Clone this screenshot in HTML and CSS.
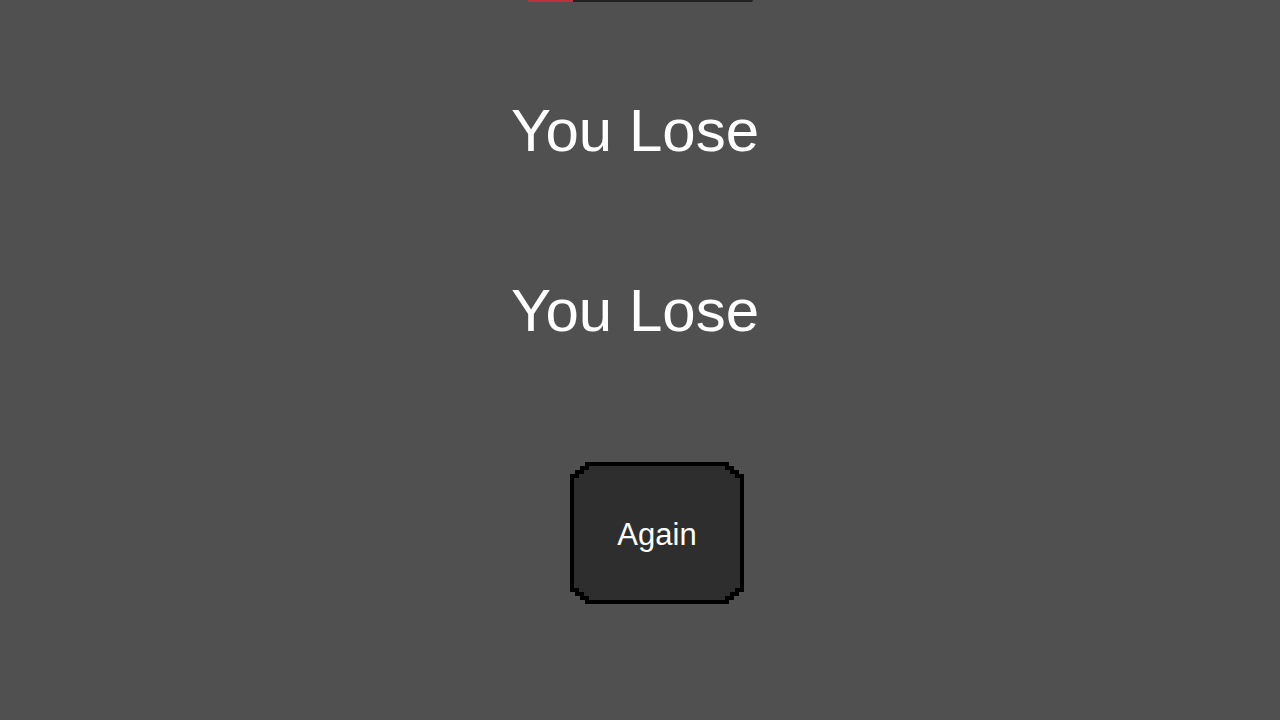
FILE: index.html
```html
<!DOCTYPE html>
<html lang="en">
<head>
    <meta charset="UTF-8">
    <title>Game over</title>
    <link rel="stylesheet" href="styles.css">
</head>
<body>
<main class="screen">
    <div class="health">
        <div class="health-fill" style="width: 20%"></div>
    </div>
    <h1 class="result">You Lose</h1>
    <h1 class="result">You Lose</h1>
    <button class="pixel-btn">
        <span class="pixel-btn-inner">Again</span>
    </button>
</main>
</body>
</html>
```

FILE: styles.css
```css
* {
    padding: 0;
    margin: 0;
    box-sizing: border-box;
}

html, body {
    height: 100%;
}

body {
    background-color: #505050;
    font-family: "Liberation Sans", Arial, sans-serif;
    color: #fff;
    overflow: hidden;
}

.screen {
    display: flex;
    flex-direction: column;
    align-items: center;
}

/* health bar, mostly scrolled off the top */
.health {
    width: 225px;
    height: 20px;
    margin-top: -18px;
    background-color: #222;
    border-radius: 0 0 2px 2px;
    display: flex;
}
.health-fill {
    background-color: #c0303c;
}

.result {
    font-size: 60px;
    font-weight: normal;
    line-height: 60px;
    margin-right: 10px;
}
.result:first-of-type {
    margin-top: 99px;
}
.result + .result {
    margin-top: 120px;
}

.pixel-btn {
    margin-top: 121px;
    margin-left: 34px;
    width: 174px;
    height: 142px;
    padding: 4px;
    border: none;
    background-color: #000;
    font-family: inherit;
    cursor: pointer;
    clip-path: polygon(
        0 12px, 5px 12px, 5px 8px, 10px 8px, 10px 4px, 15px 4px, 15px 0,
        calc(100% - 15px) 0, calc(100% - 15px) 4px, calc(100% - 10px) 4px, calc(100% - 10px) 8px, calc(100% - 5px) 8px, calc(100% - 5px) 12px, 100% 12px,
        100% calc(100% - 12px), calc(100% - 5px) calc(100% - 12px), calc(100% - 5px) calc(100% - 8px), calc(100% - 10px) calc(100% - 8px), calc(100% - 10px) calc(100% - 4px), calc(100% - 15px) calc(100% - 4px), calc(100% - 15px) 100%,
        15px 100%, 15px calc(100% - 4px), 10px calc(100% - 4px), 10px calc(100% - 8px), 5px calc(100% - 8px), 5px calc(100% - 12px), 0 calc(100% - 12px)
    );
}

.pixel-btn-inner {
    display: flex;
    align-items: center;
    justify-content: center;
    width: 100%;
    height: 100%;
    padding-top: 4px;
    background-color: #2e2e2e;
    color: #fff;
    font-size: 31px;
    clip-path: polygon(
        0 12px, 5px 12px, 5px 8px, 10px 8px, 10px 4px, 15px 4px, 15px 0,
        calc(100% - 15px) 0, calc(100% - 15px) 4px, calc(100% - 10px) 4px, calc(100% - 10px) 8px, calc(100% - 5px) 8px, calc(100% - 5px) 12px, 100% 12px,
        100% calc(100% - 12px), calc(100% - 5px) calc(100% - 12px), calc(100% - 5px) calc(100% - 8px), calc(100% - 10px) calc(100% - 8px), calc(100% - 10px) calc(100% - 4px), calc(100% - 15px) calc(100% - 4px), calc(100% - 15px) 100%,
        15px 100%, 15px calc(100% - 4px), 10px calc(100% - 4px), 10px calc(100% - 8px), 5px calc(100% - 8px), 5px calc(100% - 12px), 0 calc(100% - 12px)
    );
}
```
